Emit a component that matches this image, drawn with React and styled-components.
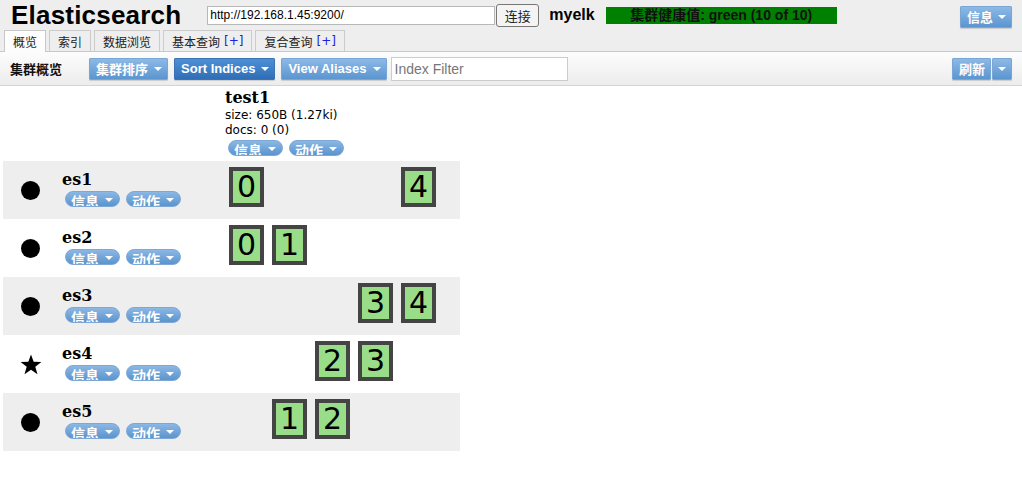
import React from 'react';
import styled, { createGlobalStyle, css } from 'styled-components';

const GlobalStyle = createGlobalStyle`
  body {
    margin: 0;
    background: #fff;
    font-family: "Liberation Sans", Arial, "Noto Sans CJK SC", sans-serif;
    font-size: 12px;
    color: #000;
  }
`;

const SANS = `"Liberation Sans", Arial, "Noto Sans CJK SC", sans-serif`;
const VERDANA = `"DejaVu Sans", Verdana, "Noto Sans CJK SC", sans-serif`;
const SERIF = `"DejaVu Serif", "Liberation Serif", "Noto Sans CJK SC", serif`;
const CJK = `"Noto Sans CJK SC", sans-serif`;

const nodes = [
  { name: 'es1', master: false, shards: [0, null, null, null, 4] },
  { name: 'es2', master: false, shards: [0, 1, null, null, null] },
  { name: 'es3', master: false, shards: [null, null, null, 3, 4] },
  { name: 'es4', master: true, shards: [null, null, 2, 3, null] },
  { name: 'es5', master: false, shards: [null, 1, 2, null, null] },
];

const tabs = [
  { label: '概览', active: true },
  { label: '索引' },
  { label: '数据浏览' },
  { label: '基本查询', plus: true },
  { label: '复合查询', plus: true },
];

const Caret = () => <CaretShape />;

const Menus = ({ indent }) => (
  <PillRow $indent={indent}>
    <Pill>
      信息 <Caret />
    </Pill>
    <Pill>
      动作 <Caret />
    </Pill>
  </PillRow>
);

const App = () => (
  <>
    <GlobalStyle />
    <Header>
      <TopRow>
        <Title>Elasticsearch</Title>
        <UrlInput defaultValue="http://192.168.1.45:9200/" />
        <ConnectButton>连接</ConnectButton>
        <ClusterName>myelk</ClusterName>
        <Health>集群健康值: green (10 of 10)</Health>
        <Spring />
        <BlueButton $top>
          信息 <Caret />
        </BlueButton>
      </TopRow>
      <Tabs>
        {tabs.map((t) => (
          <Tab key={t.label} $active={t.active}>
            {t.label}
            {t.plus && <Plus>[+]</Plus>}
          </Tab>
        ))}
      </Tabs>
    </Header>

    <Toolbar>
      <ToolbarTitle>集群概览</ToolbarTitle>
      <BlueButton>
        集群排序 <Caret />
      </BlueButton>
      <BlueButton $dark>
        Sort Indices <Caret />
      </BlueButton>
      <BlueButton>
        View Aliases <Caret />
      </BlueButton>
      <FilterInput placeholder="Index Filter" />
      <Spring />
      <SplitGroup>
        <BlueButton>刷新</BlueButton>
        <BlueButton $split>
          <Caret />
        </BlueButton>
      </SplitGroup>
    </Toolbar>

    <Overview>
      <Cell />
      <Cell />
      <IndexHead>
        <IndexName>test1</IndexName>
        <IndexInfo>size: 650B (1.27ki)</IndexInfo>
        <IndexInfo>docs: 0 (0)</IndexInfo>
        <Menus indent={3} />
      </IndexHead>

      {nodes.map((n, i) => (
        <React.Fragment key={n.name}>
          <IconCell $odd={i % 2 === 0}>
            {n.master ? (
              <svg width="22" height="21" viewBox="0 0 24 23">
                <path d="M12 0.5 L14.9 8.4 L23.4 8.7 L16.7 13.9 L19.1 22.1 L12 17.3 L4.9 22.1 L7.3 13.9 L0.6 8.7 L9.1 8.4 Z" fill="#000" />
              </svg>
            ) : (
              <Dot />
            )}
          </IconCell>
          <NameCell $odd={i % 2 === 0}>
            <NodeName>{n.name}</NodeName>
            <Menus indent={3} />
          </NameCell>
          <ShardCell $odd={i % 2 === 0}>
            {n.shards.map((s, j) => (
              <ShardSlot key={j}>{s !== null && <Shard>{s}</Shard>}</ShardSlot>
            ))}
          </ShardCell>
        </React.Fragment>
      ))}
    </Overview>
  </>
);

const Header = styled.div`
  background: #eee;
  border-bottom: 1px solid #c8c8c8;
`;

const TopRow = styled.div`
  display: flex;
  align-items: center;
  height: 30px;
  padding: 0 10px 0 11px;
`;

const Title = styled.h1`
  margin: 0 26px 0 0;
  font-family: ${SANS};
  font-size: 26px;
  font-weight: bold;
  line-height: 30px;
  letter-spacing: 0.2px;
`;

const UrlInput = styled.input`
  box-sizing: border-box;
  width: 288px;
  height: 19px;
  margin: 0;
  padding: 0 2px;
  border: 1px solid #b8b8b8;
  font-family: ${SANS};
  font-size: 12px;
  background: #fff;
`;

const ConnectButton = styled.button`
  box-sizing: border-box;
  height: 23px;
  width: 43px;
  margin: 0 0 0 1px;
  padding: 0;
  border: 1px solid #777;
  border-radius: 3px;
  background: #f4f4f4;
  font-family: ${CJK};
  font-size: 13px;
  color: #222;
`;

const ClusterName = styled.span`
  margin: 0 11px 0 10px;
  font-family: ${SANS};
  font-weight: bold;
  font-size: 16px;
`;

const Health = styled.span`
  box-sizing: border-box;
  width: 231px;
  height: 17px;
  line-height: 17px;
  text-align: center;
  background: #008000;
  color: #111;
  font-family: ${SANS};
  font-weight: bold;
  font-size: 14px;
`;

const Spring = styled.div`
  flex: 1;
`;

const Tabs = styled.div`
  display: flex;
  align-items: flex-end;
  gap: 3px;
  height: 21px;
  padding-left: 4px;
`;

const Tab = styled.div`
  display: flex;
  gap: 4px;
  box-sizing: border-box;
  height: 21px;
  padding: 0 8px;
  border: 1px solid #ccc;
  border-bottom: none;
  font-family: ${CJK};
  font-size: 12px;
  line-height: 21px;
  color: #222;
  background: #eee;
  ${(p) =>
    p.$active &&
    css`
      height: 22px;
      margin-bottom: -1px;
      background: linear-gradient(#fff, #fcfcfc);
      border-color: #c8c8c8;
    `}
`;

const Plus = styled.span`
  color: #2020e0;
  font-family: ${VERDANA};
  font-size: 12px;
`;

const Toolbar = styled.div`
  display: flex;
  align-items: center;
  gap: 6px;
  height: 33px;
  padding: 0 10px;
  background: linear-gradient(#fdfdfd, #ececec);
  border-bottom: 1px solid #d4d4d4;
`;

const ToolbarTitle = styled.span`
  width: 73px;
  font-family: ${CJK};
  font-weight: bold;
  font-size: 13px;
  color: #111;
`;

const BlueButton = styled.button`
  display: flex;
  align-items: center;
  gap: 6px;
  box-sizing: border-box;
  height: 22px;
  margin: 0;
  padding: 0 5px 0 6px;
  border: 1px solid #7aa6d6;
  border-radius: 1px;
  background: linear-gradient(#8db9e6, #5b95d0);
  color: #fff;
  font-family: ${SANS};
  font-weight: bold;
  font-size: 13px;
  box-shadow: 0 1px 1px rgba(0, 0, 0, 0.15);
  ${(p) =>
    p.$dark &&
    css`
      border-color: #3b74b6;
      background: linear-gradient(#4d90d6, #2f6eb6);
    `}
  ${(p) =>
    p.$top &&
    css`
      margin-top: 3px;
      gap: 5px;
    `}
  ${(p) =>
    p.$split &&
    css`
      width: 20px;
      padding: 0;
      justify-content: center;
    `}
`;

const SplitGroup = styled.div`
  display: flex;
  gap: 1px;
`;

const CaretShape = styled.span`
  display: inline-block;
  width: 0;
  height: 0;
  border-left: 4px solid transparent;
  border-right: 4px solid transparent;
  border-top: 4px solid #fff;
  margin-top: 1px;
`;

const FilterInput = styled.input`
  box-sizing: border-box;
  width: 177px;
  height: 24px;
  margin-left: -2px;
  padding: 0 3px;
  border: 1px solid #ccc;
  font-family: ${SANS};
  font-size: 14px;
  &::placeholder {
    color: #777;
  }
`;

const Overview = styled.div`
  display: grid;
  grid-template-columns: 55px 167px 235px;
  grid-template-rows: 75px repeat(5, 58px);
  margin-left: 3px;
`;

const Cell = styled.div``;

const IndexHead = styled.div`
  padding: 3px 0 0 0;
`;

const IndexName = styled.div`
  font-family: ${SERIF};
  font-weight: bold;
  font-size: 16px;
  line-height: 18px;
  margin-bottom: 1px;
`;

const IndexInfo = styled.div`
  font-family: ${VERDANA};
  font-size: 12px;
  line-height: 15px;
`;

const PillRow = styled.div`
  display: flex;
  gap: 6px;
  margin-top: 2px;
  margin-left: ${(p) => p.$indent || 0}px;
`;

const Pill = styled.div`
  display: flex;
  align-items: flex-start;
  gap: 6px;
  box-sizing: border-box;
  height: 16px;
  padding: 0 6px 0 5px;
  overflow: hidden;
  border: 1px solid #7ea7d6;
  border-radius: 8px;
  background: linear-gradient(#8bb8e4, #5b94ce);
  color: #fff;
  font-family: ${CJK};
  font-weight: bold;
  font-size: 14px;
  line-height: 18px;
  & > span {
    margin-top: 6px;
  }
`;

const rowBg = css`
  background: ${(p) => (p.$odd ? '#eee' : '#fff')};
`;

const IconCell = styled.div`
  ${rowBg};
  display: flex;
  align-items: center;
  justify-content: center;
`;

const Dot = styled.div`
  width: 19px;
  height: 19px;
  border-radius: 50%;
  background: #000;
`;

const NameCell = styled.div`
  ${rowBg};
  padding: 10px 0 0 4px;
`;

const NodeName = styled.div`
  font-family: ${SERIF};
  font-weight: bold;
  font-size: 16px;
  line-height: 18px;
  margin-bottom: 2px;
`;

const ShardCell = styled.div`
  ${rowBg};
  display: flex;
  gap: 8px;
  padding: 6px 0 0 4px;
`;

const ShardSlot = styled.div`
  width: 35px;
`;

const Shard = styled.div`
  box-sizing: border-box;
  width: 35px;
  height: 40px;
  border: 4px solid #444;
  background: #99dd88;
  text-align: center;
  font-family: ${VERDANA};
  font-size: 30px;
  line-height: 32px;
  color: #000;
`;

export default App;
